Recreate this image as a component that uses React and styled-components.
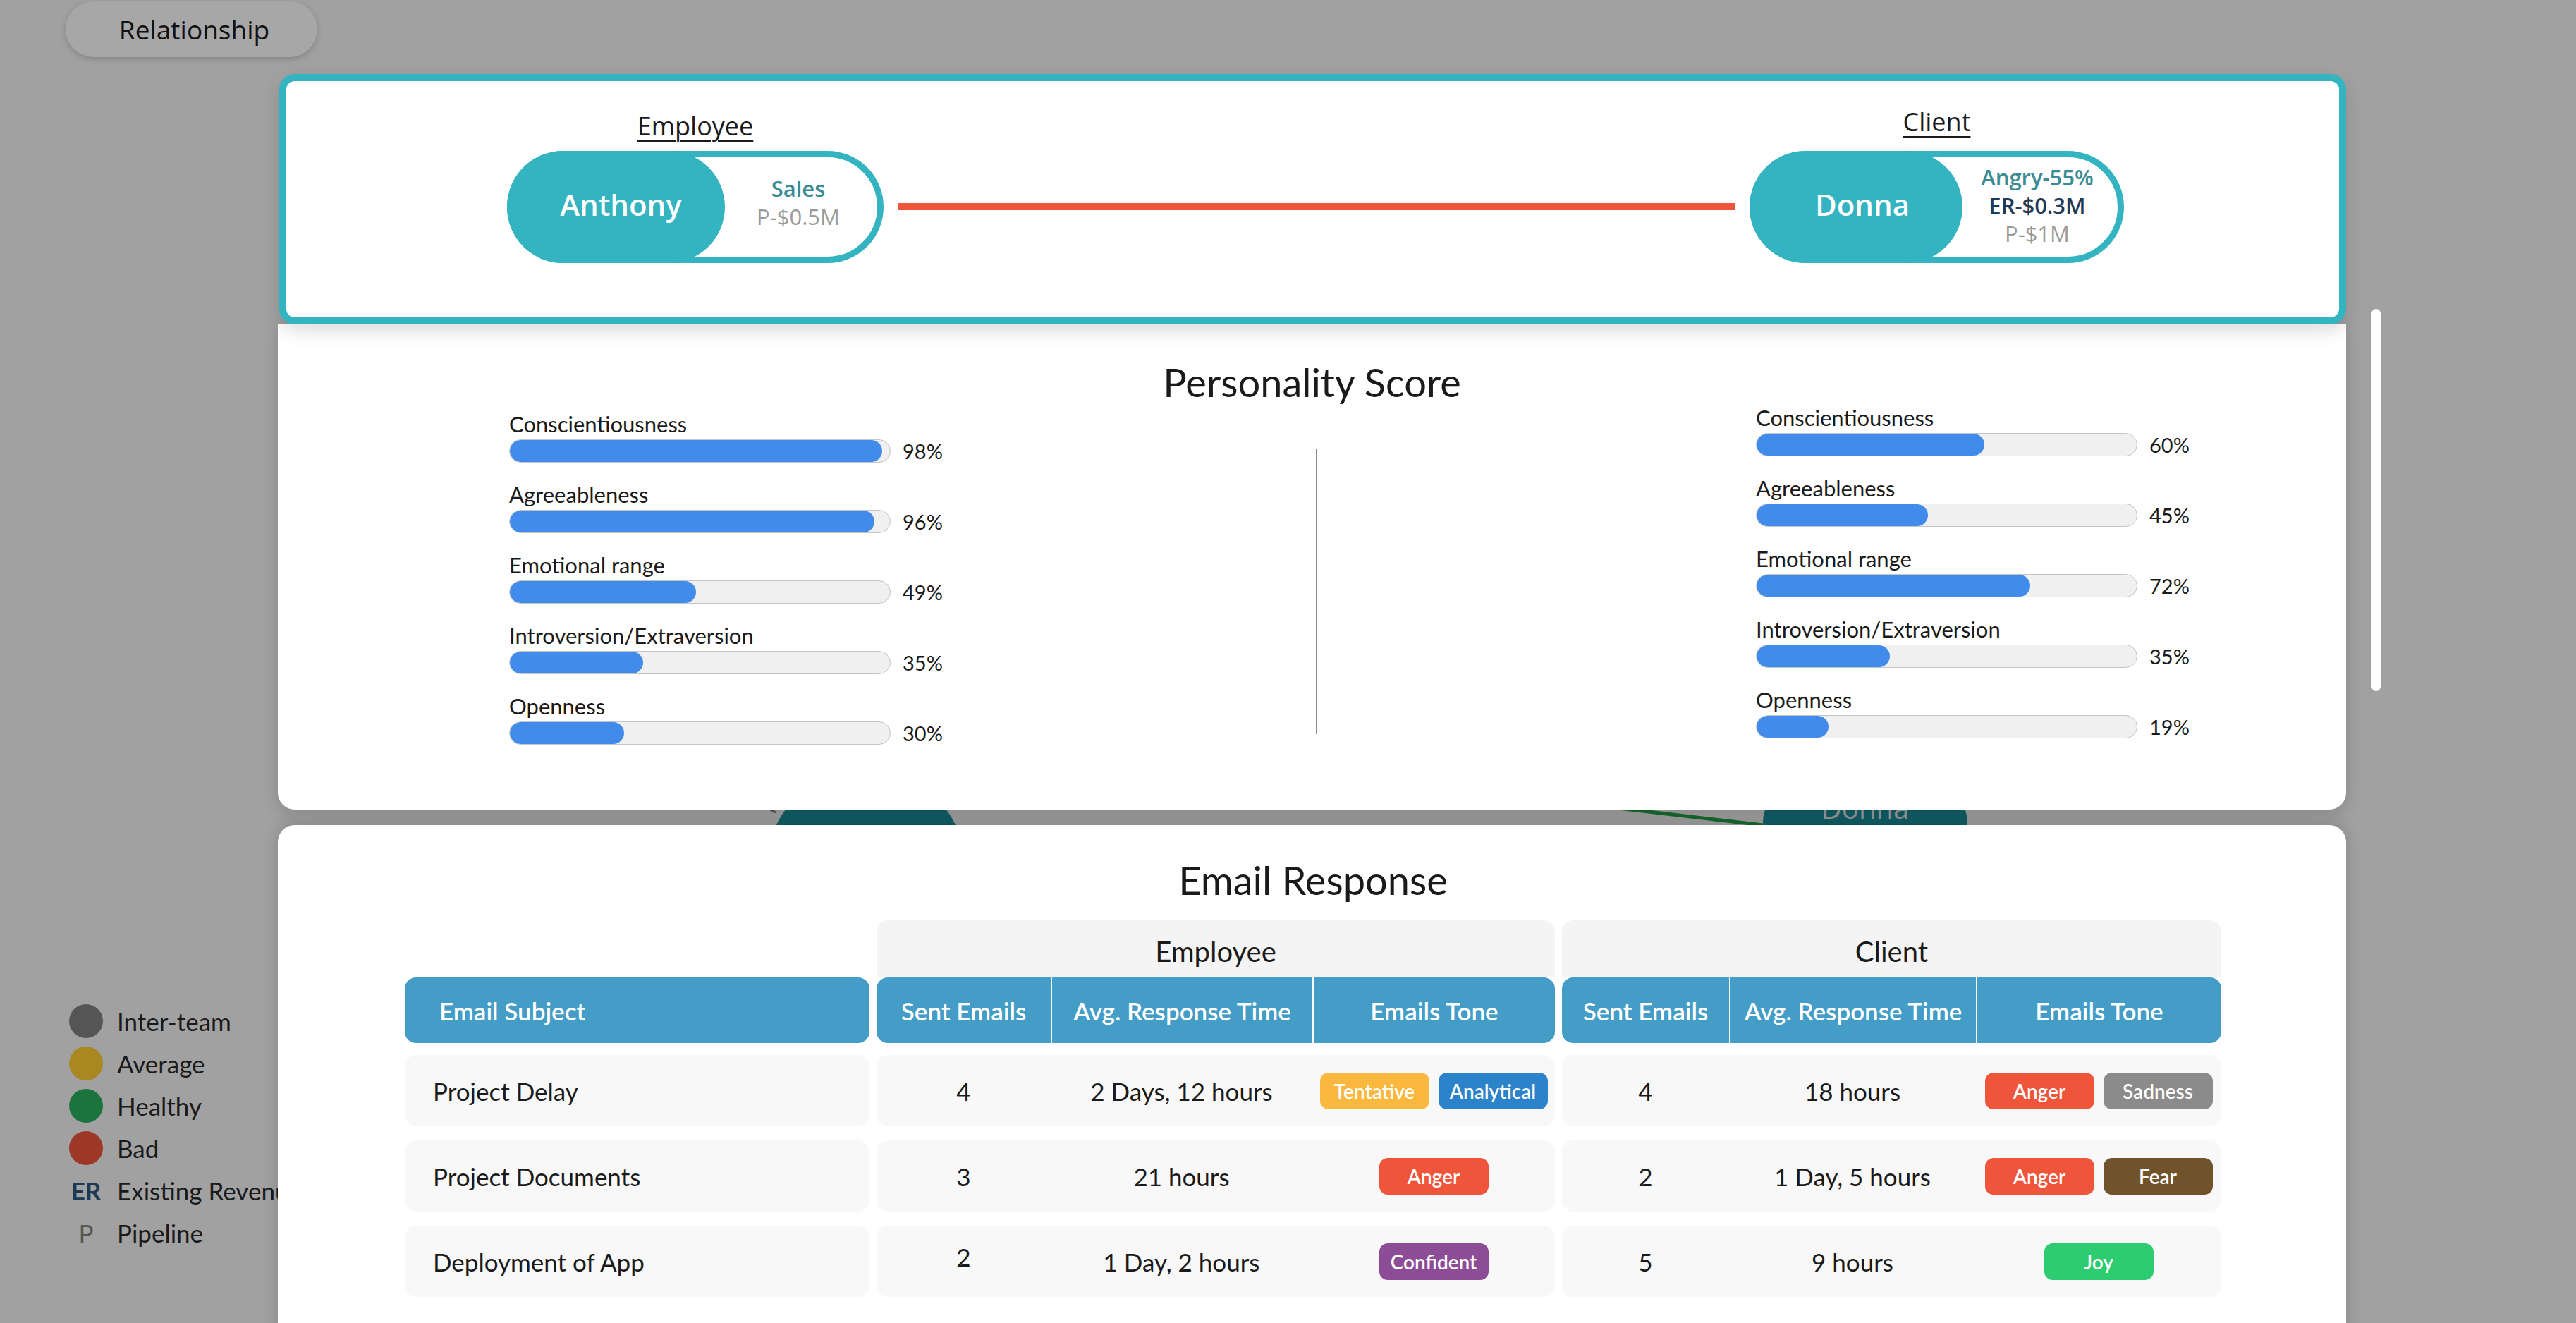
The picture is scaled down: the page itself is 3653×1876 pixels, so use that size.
import React from 'react';
import styled, { createGlobalStyle } from 'styled-components';

const employeeScores = [
  { label: 'Conscientiousness', value: 98 },
  { label: 'Agreeableness', value: 96 },
  { label: 'Emotional range', value: 49 },
  { label: 'Introversion/Extraversion', value: 35 },
  { label: 'Openness', value: 30 },
];

const clientScores = [
  { label: 'Conscientiousness', value: 60 },
  { label: 'Agreeableness', value: 45 },
  { label: 'Emotional range', value: 72 },
  { label: 'Introversion/Extraversion', value: 35 },
  { label: 'Openness', value: 19 },
];

const toneColors = {
  Tentative: '#fbb83f',
  Analytical: '#2d83ca',
  Anger: '#ef553b',
  Sadness: '#8b8b8b',
  Fear: '#70532b',
  Joy: '#2ecc71',
  Confident: '#8d4d96',
};

const emails = [
  {
    subject: 'Project Delay',
    emp: { sent: '4', time: '2 Days, 12 hours', tones: ['Tentative', 'Analytical'] },
    cli: { sent: '4', time: '18 hours', tones: ['Anger', 'Sadness'] },
  },
  {
    subject: 'Project Documents',
    emp: { sent: '3', time: '21 hours', tones: ['Anger'] },
    cli: { sent: '2', time: '1 Day, 5 hours', tones: ['Anger', 'Fear'] },
  },
  {
    subject: 'Deployment of App',
    emp: { sent: '2', time: '1 Day, 2 hours', tones: ['Confident'], lift: true },
    cli: { sent: '5', time: '9 hours', tones: ['Joy'] },
  },
];

const legend = [
  { color: '#555555', text: 'Inter-team' },
  { color: '#a98721', text: 'Average' },
  { color: '#1b733d', text: 'Healthy' },
  { color: '#9d3827', text: 'Bad' },
  { mark: 'ER', text: 'Existing Revenue' },
  { mark: 'P', text: 'Pipeline' },
];

const GlobalStyle = createGlobalStyle`
  html, body {
    margin: 0;
    padding: 0;
    background: #a1a1a1;
  }
  body {
    font-family: Lato, "Noto Sans", sans-serif;
    color: #1a1a1a;
    overflow: hidden;
  }
  * {
    box-sizing: border-box;
  }
`;

const Page = styled.div`
  position: relative;
  width: 3653px;
  height: 1876px;
  overflow: hidden;
  background: #a1a1a1;
`;

const GraphCanvas = styled.svg`
  position: absolute;
  top: 0;
  left: 0;
  z-index: 0;
`;

const TabButton = styled.div`
  position: relative;
  z-index: 1;
  width: 357px;
  height: 79px;
  margin: 2px 0 0 93px;
  padding-left: 8px;
  border-radius: 40px;
  background: #a7a7a7;
  box-shadow: 0 3px 10px rgba(0, 0, 0, 0.18);
  display: flex;
  align-items: center;
  justify-content: center;
  font-family: "Open Sans", sans-serif;
  font-size: 37px;
  color: #111;
`;

const Legend = styled.ul`
  position: relative;
  z-index: 1;
  list-style: none;
  margin: 1337px 0 0 98px;
  padding: 0;
`;

const LegendItem = styled.li`
  height: 60px;
  display: flex;
  align-items: center;
  font-size: 35px;
  color: #1a1a1a;
  white-space: nowrap;
`;

const Dot = styled.span`
  width: 48px;
  height: 48px;
  border-radius: 50%;
  background: ${p => p.$color};
`;

const Mark = styled.span`
  width: 48px;
  text-align: center;
  font-weight: ${p => (p.$bold ? 700 : 400)};
  color: ${p => (p.$bold ? '#1d3a52' : '#555')};
`;

const LegendText = styled.span`
  margin-left: 20px;
`;

const Modal = styled.div`
  position: absolute;
  top: 105px;
  left: 394px;
  z-index: 2;
  display: flex;
  align-items: flex-start;
`;

const ModalColumn = styled.div`
  width: 2933px;
  display: flex;
  flex-direction: column;
`;

const ScrollThumb = styled.div`
  width: 13px;
  height: 542px;
  margin: 333px 0 0 36px;
  border-radius: 7px;
  background: #fff;
`;

const TopCard = styled.div`
  position: relative;
  z-index: 2;
  height: 355px;
  margin-left: 2px;
  padding: 42px 305px 0 313px;
  border: 10px solid #34b3c1;
  border-radius: 22px;
  background: #fff;
  box-shadow: 0 10px 26px rgba(0, 0, 0, 0.13);
  display: grid;
  grid-template-columns: 534px 1fr 531px;
  grid-template-rows: 57px 159px;
  align-content: start;
  column-gap: 21px;
  font-family: "Open Sans", sans-serif;
`;

const PartyLabel = styled.div`
  grid-row: 1;
  grid-column: ${p => p.$col};
  justify-self: center;
  height: 44px;
  line-height: 44px;
  margin-top: ${p => (p.$up ? -6 : 0)}px;
  font-size: 36px;
  color: #1a1a1a;
  text-decoration: underline;
  text-decoration-thickness: 2px;
  text-underline-offset: 7px;
`;

const Pill = styled.div`
  grid-row: 2;
  grid-column: ${p => p.$col};
  display: flex;
  align-items: center;
  height: 159px;
  border: 9px solid #34b3c1;
  border-radius: 80px;
  background: #fff;
`;

const PillName = styled.div`
  align-self: stretch;
  width: ${p => p.$w}px;
  margin: -9px 0 -9px -9px;
  padding-left: ${p => p.$shift}px;
  padding-bottom: 8px;
  border-radius: 80px;
  background: #34b3c1;
  display: flex;
  align-items: center;
  justify-content: center;
  font-size: 42px;
  font-weight: 600;
  color: #fff;
`;

const PillInfo = styled.div`
  flex: 1;
  display: flex;
  flex-direction: column;
  align-items: center;
  padding-right: 8px;
  padding-bottom: ${p => p.$raise}px;
  line-height: 40px;
  font-size: 31px;
`;

const InfoLine = styled.span`
  font-weight: ${p => (p.$tone === 'muted' ? 400 : 600)};
  color: ${p =>
    p.$tone === 'teal' ? '#3a8b94' : p.$tone === 'navy' ? '#1f3b57' : '#9a9a9a'};
`;

const Connector = styled.div`
  grid-row: 2;
  grid-column: 2;
  align-self: center;
  height: 10px;
  margin-top: -2px;
  background: #ef553b;
`;

const PersonalityPanel = styled.section`
  position: relative;
  z-index: 1;
  padding: 48px 0 65px;
  border-radius: 0 0 24px 24px;
  background: #fff;
  box-shadow: 0 6px 22px rgba(0, 0, 0, 0.16);
`;

const PanelTitle = styled.h2`
  margin: 0;
  height: 67px;
  line-height: 67px;
  text-align: center;
  font-size: 56px;
  font-weight: 400;
  color: #1a1a1a;
`;

const ScoreColumns = styled.div`
  display: grid;
  grid-template-columns: 1472px 2px 1fr;
  align-items: start;
`;

const ScoreColumn = styled.div`
  padding-left: ${p => p.$pad}px;
  margin-top: ${p => p.$top}px;
`;

const Divider = styled.div`
  height: 405px;
  margin-top: 61px;
  background: #8a8a8a;
`;

const ScoreRow = styled.div`
  display: grid;
  grid-template-columns: 541px auto;
  grid-template-rows: 37px 33px;
  row-gap: 3px;
  column-gap: 17px;
  align-items: center;
  margin-bottom: 27px;
`;

const ScoreLabel = styled.div`
  grid-column: 1 / 3;
  line-height: 37px;
  font-size: 31px;
  color: #1a1a1a;
`;

const Track = styled.div`
  height: 33px;
  border: 1px solid #c4c4c4;
  border-radius: 17px;
  background: #f0f0f0;
  overflow: hidden;
`;

const Fill = styled.div`
  height: 100%;
  border-radius: 17px;
  background: #418beb;
`;

const Percent = styled.span`
  line-height: 33px;
  font-size: 29px;
  color: #1a1a1a;
`;

const EmailPanel = styled.section`
  position: relative;
  z-index: 1;
  height: 760px;
  margin-top: 22px;
  padding: 44px 177px 0 180px;
  border-radius: 24px;
  background: #fff;
  box-shadow: 0 -4px 22px rgba(0, 0, 0, 0.16);
`;

const Table = styled.div`
  display: flex;
  gap: 10px;
  margin-top: 24px;
`;

const Group = styled.div`
  width: ${p => p.$w}px;
  display: flex;
  flex-direction: column;
`;

const GroupHead = styled.div`
  height: 81px;
  border-radius: 16px 16px 0 0;
  background: ${p => (p.$blank ? 'transparent' : '#f4f4f4')};
  display: flex;
  align-items: center;
  justify-content: center;
  padding-top: 6px;
  font-size: 40px;
  color: #1a1a1a;
`;

const HeadRow = styled.div`
  height: 93px;
  border-radius: 16px;
  background: #449dc6;
  display: grid;
  grid-template-columns: ${p => p.$cols};
  margin-bottom: 17px;
`;

const HeadCell = styled.div`
  display: flex;
  align-items: center;
  justify-content: ${p => (p.$left ? 'flex-start' : 'center')};
  padding-left: ${p => (p.$left ? 49 : 0)}px;
  border-left: ${p => (p.$divider ? '2px solid #fff' : 'none')};
  font-size: 35px;
  font-weight: 600;
  color: #fff;
  white-space: nowrap;
`;

const DataRow = styled.div`
  height: 101px;
  border-radius: 16px;
  background: #f8f8f8;
  display: grid;
  grid-template-columns: ${p => p.$cols};
  margin-bottom: 20px;
`;

const DataCell = styled.div`
  display: flex;
  align-items: center;
  justify-content: ${p => (p.$left ? 'flex-start' : 'center')};
  gap: 13px;
  padding-left: ${p => (p.$left ? 40 : 0)}px;
  padding-bottom: ${p => (p.$lift ? 14 : 0)}px;
  font-size: 35px;
  color: #1a1a1a;
  white-space: nowrap;
`;

const Chip = styled.span`
  width: 155px;
  height: 52px;
  border-radius: 12px;
  background: ${p => p.$color};
  display: flex;
  align-items: center;
  justify-content: center;
  font-size: 28px;
  font-weight: 600;
  color: #fff;
`;

const EMP_COLS = '247px 371px 344px';
const CLI_COLS = '237px 350px 348px';

const ScoreList = ({ scores, pad, top }) => (
  <ScoreColumn $pad={pad} $top={top}>
    {scores.map(s => (
      <ScoreRow key={s.label}>
        <ScoreLabel>{s.label}</ScoreLabel>
        <Track>
          <Fill style={{ width: `${s.value}%` }} />
        </Track>
        <Percent>{s.value}%</Percent>
      </ScoreRow>
    ))}
  </ScoreColumn>
);

const SideGroup = ({ title, cols, width, side }) => (
  <Group $w={width}>
    <GroupHead>{title}</GroupHead>
    <HeadRow $cols={cols}>
      <HeadCell>Sent Emails</HeadCell>
      <HeadCell $divider>Avg. Response Time</HeadCell>
      <HeadCell $divider>Emails Tone</HeadCell>
    </HeadRow>
    {emails.map(e => {
      const d = e[side];
      return (
        <DataRow key={e.subject} $cols={cols}>
          <DataCell $lift={d.lift}>{d.sent}</DataCell>
          <DataCell>{d.time}</DataCell>
          <DataCell>
            {d.tones.map(t => (
              <Chip key={t} $color={toneColors[t]}>{t}</Chip>
            ))}
          </DataCell>
        </DataRow>
      );
    })}
  </Group>
);

const App = () => {
  return (
    <Page>
      <GlobalStyle />
      <GraphCanvas width="3653" height="1876" viewBox="0 0 3653 1876">
        <line x1="1040" y1="1120" x2="1100" y2="1152" stroke="#555" strokeWidth="3" />
        <ellipse cx="1228" cy="1207" rx="135" ry="110" fill="#115f67" />
        <line x1="2200" y1="1135" x2="2500" y2="1170" stroke="#176b30" strokeWidth="5" />
        <ellipse cx="2645" cy="1165" rx="145" ry="80" fill="#115f67" />
        <text x="2645" y="1161" textAnchor="middle" fontSize="40" fontFamily="Open Sans, sans-serif" fill="#9c9c9c">
          Donna
        </text>
      </GraphCanvas>

      <TabButton>Relationship</TabButton>

      <Legend>
        {legend.map(item => (
          <LegendItem key={item.text}>
            {item.color ? <Dot $color={item.color} /> : <Mark $bold={item.mark === 'ER'}>{item.mark}</Mark>}
            <LegendText>{item.text}</LegendText>
          </LegendItem>
        ))}
      </Legend>

      <Modal>
        <ModalColumn>
          <TopCard>
            <PartyLabel $col={1}>Employee</PartyLabel>
            <PartyLabel $col={3} $up>Client</PartyLabel>
            <Pill $col={1}>
              <PillName $w={309} $shift={14}>Anthony</PillName>
              <PillInfo $raise={14}>
                <InfoLine $tone="teal">Sales</InfoLine>
                <InfoLine $tone="muted">P-$0.5M</InfoLine>
              </PillInfo>
            </Pill>
            <Connector />
            <Pill $col={3}>
              <PillName $w={302} $shift={18}>Donna</PillName>
              <PillInfo $raise={6}>
                <InfoLine $tone="teal">Angry-55%</InfoLine>
                <InfoLine $tone="navy">ER-$0.3M</InfoLine>
                <InfoLine $tone="muted">P-$1M</InfoLine>
              </PillInfo>
            </Pill>
          </TopCard>

          <PersonalityPanel>
            <PanelTitle>Personality Score</PanelTitle>
            <ScoreColumns>
              <ScoreList scores={employeeScores} pad={328} top={8} />
              <Divider />
              <ScoreList scores={clientScores} pad={622} top={-1} />
            </ScoreColumns>
          </PersonalityPanel>

          <EmailPanel>
            <PanelTitle>Email Response</PanelTitle>
            <Table>
              <Group $w={659}>
                <GroupHead $blank />
                <HeadRow $cols="1fr">
                  <HeadCell $left>Email Subject</HeadCell>
                </HeadRow>
                {emails.map(e => (
                  <DataRow key={e.subject} $cols="1fr">
                    <DataCell $left>{e.subject}</DataCell>
                  </DataRow>
                ))}
              </Group>
              <SideGroup title="Employee" cols={EMP_COLS} width={962} side="emp" />
              <SideGroup title="Client" cols={CLI_COLS} width={935} side="cli" />
            </Table>
          </EmailPanel>
        </ModalColumn>
        <ScrollThumb />
      </Modal>
    </Page>
  );
};

export default App;
